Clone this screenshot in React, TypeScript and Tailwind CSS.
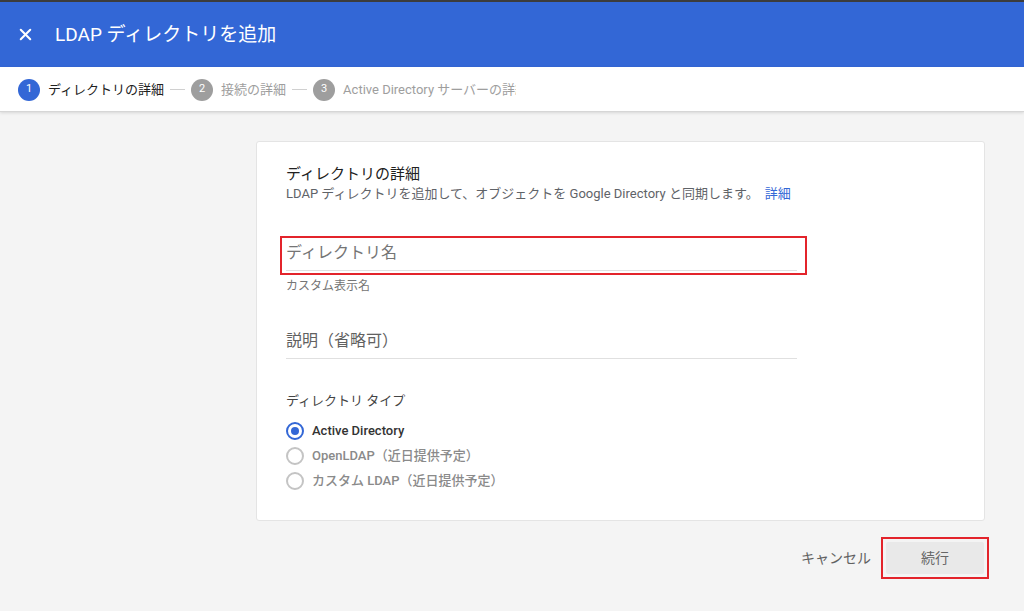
import { X } from 'lucide-react';

const font = { fontFamily: 'Roboto, "Noto Sans CJK JP", sans-serif' };

export default function App() {
  return (
    <div style={font} className="w-[1024px] h-[611px] bg-[#f4f4f4] overflow-hidden flex flex-col">
      {/* Header */}
      <div className="h-[2px] bg-[#3c3c3c]" />
      <div className="h-[65px] bg-[#3367d6] flex items-center pl-[16px] text-white">
        <X className="w-[19px] h-[19px]" strokeWidth={2.6} />
        <h1 className="ml-[20px] text-[19px] leading-none">LDAP ディレクトリを追加</h1>
      </div>

      {/* Stepper */}
      <div className="h-[45px] bg-white border-b border-[#d6d6d6] shadow-[0_1px_3px_rgba(0,0,0,0.12)] flex items-center pl-[18px] pt-[1px]">
        <div className="flex items-center w-[498px] overflow-hidden whitespace-nowrap text-[13px]">
          <Step n="1" label="ディレクトリの詳細" active />
          <Dash />
          <Step n="2" label="接続の詳細" />
          <Dash />
          <Step n="3" label="Active Directory サーバーの詳細" />
        </div>
      </div>

      {/* Card */}
      <div className="flex-1 pl-[256px] pt-[29px]">
        <div className="w-[729px] h-[380px] bg-white border border-[#e4e4e4] rounded-[3px] pl-[29px] pt-[22px]">
          <h2 className="text-[15px] text-[#212121] leading-[20px]">ディレクトリの詳細</h2>
          <p className="text-[13px] text-[#5f6368] leading-[18px] mt-[1px]">
            LDAP ディレクトリを追加して、オブジェクトを Google Directory と同期します。
            <span className="ml-[6px] text-[#3367d6]">詳細</span>
          </p>

          <div className="mt-[33px] -ml-[6px] w-[527px] h-[39px] border-2 border-[#e3242b] pl-[4px] pr-[8px] pt-[4px]">
            <div className="text-[16px] text-[#757575] leading-[22px] pb-[6px] border-b border-[#e0e0e0]">ディレクトリ名</div>
          </div>
          <p className="text-[12px] text-[#757575] mt-[3px] leading-[16px]">カスタム表示名</p>

          <div className="mt-[36px] w-[511px] text-[16px] text-[#616161] leading-[22px] pb-[6px] border-b border-[#e0e0e0]">
            説明（省略可）
          </div>

          <p className="mt-[33px] text-[13px] text-[#444] leading-[18px]">ディレクトリ タイプ</p>

          <div className="mt-[12px] flex flex-col gap-[7px]">
            <Radio label="Active Directory" checked />
            <Radio label="OpenLDAP（近日提供予定）" />
            <Radio label="カスタム LDAP（近日提供予定）" />
          </div>
        </div>

        {/* Actions */}
        <div className="w-[733px] flex justify-end items-center mt-[16px]">
          <span className="text-[14px] text-[#616161] mr-[10px]">キャンセル</span>
          <div className="w-[108px] h-[42px] border-2 border-[#e3242b] p-[3px]">
            <div className="w-full h-full bg-[#e9e9e9] rounded-[2px] flex items-center justify-center text-[14px] text-[#666]">
              続行
            </div>
          </div>
        </div>
      </div>
    </div>
  );
}

function Step({ n, label, active }: { n: string; label: string; active?: boolean }) {
  return (
    <div className="flex items-center shrink-0">
      <span
        className={`w-[22px] h-[22px] rounded-full flex items-center justify-center text-[11px] text-white ${
          active ? 'bg-[#3367d6]' : 'bg-[#9e9e9e]'
        }`}
      >
        {n}
      </span>
      <span className={`ml-[8px] ${active ? 'text-[#212121]' : 'text-[#9e9e9e]'}`}>{label}</span>
    </div>
  );
}

function Dash() {
  return <div className="w-[15px] h-px bg-[#d0d0d0] mx-[6px] shrink-0" />;
}

function Radio({ label, checked }: { label: string; checked?: boolean }) {
  return (
    <div className="flex items-center">
      <span
        className={`w-[18px] h-[18px] rounded-full border-2 flex items-center justify-center ${
          checked ? 'border-[#3367d6]' : 'border-[#c4c4c4]'
        }`}
      >
        {checked && <span className="w-[8px] h-[8px] rounded-full bg-[#3367d6]" />}
      </span>
      <span className={`ml-[8px] text-[13px] font-medium leading-[18px] ${checked ? 'text-[#333]' : 'text-[#8a8a8a]'}`}>
        {label}
      </span>
    </div>
  );
}
